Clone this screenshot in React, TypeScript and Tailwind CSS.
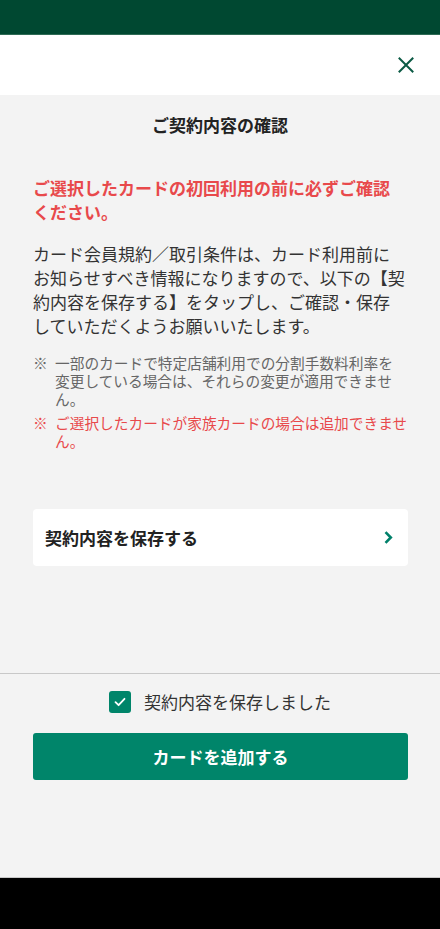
import { useState } from 'react'

const font = { fontFamily: '"Noto Sans CJK JP", "Noto Sans", sans-serif' }

function CloseIcon() {
  return (
    <svg width="16" height="16" viewBox="0 0 16 16" fill="none" stroke="#0b5a44" strokeWidth="2" strokeLinecap="square">
      <path d="M1.5 1.5 14.5 14.5M14.5 1.5 1.5 14.5" />
    </svg>
  )
}

function ChevronIcon() {
  return (
    <svg width="9" height="13" viewBox="0 0 9 13" fill="none" stroke="#00806a" strokeWidth="2.6">
      <path d="M1.5 1.2 6.8 6.5 1.5 11.8" />
    </svg>
  )
}

function CheckIcon() {
  return (
    <svg width="14" height="14" viewBox="0 0 14 14" fill="none" stroke="#fff" strokeWidth="1.8" strokeLinecap="round" strokeLinejoin="round">
      <path d="M2.5 7.2 5.6 10.2 11.5 3.8" />
    </svg>
  )
}

export default function App() {
  const [saved, setSaved] = useState(true)

  return (
    <div className="w-[440px] bg-[#f3f3f3]" style={font}>
      <div className="h-[35px] border-b border-[#2e6b55] bg-[#004831]" />
      <header className="flex h-[60px] items-center justify-end bg-white pr-[22px]">
        <button type="button" aria-label="閉じる" className="flex h-6 w-6 items-center justify-center">
          <CloseIcon />
        </button>
      </header>

      <main className="flex h-[782px] flex-col">
        <h1 className="pt-[18px] text-center text-[17px] font-bold leading-[24px] text-[#222]">ご契約内容の確認</h1>

        <div className="ml-[33px] mr-8">
          <p className="mt-[39px] whitespace-nowrap text-[17px] font-bold leading-[24px] text-[#e8494b]">
            ご選択したカードの初回利用の前に必ずご確認
            <br />
            ください。
          </p>

          <p className="mt-[18px] whitespace-nowrap text-[17px] leading-[24px] text-[#333]">
            カード会員規約／取引条件は、カード利用前に
            <br />
            お知らせすべき情報になりますので、以下の【契
            <br />
            約内容を保存する】をタップし、ご確認・保存
            <br />
            していただくようお願いいたします。
          </p>

          <ul className="mt-4 grid gap-[6px] text-[14.7px] leading-[18px]">
            <li className="flex text-[#666]">
              <span className="w-[22px] shrink-0">※</span>
              <span className="whitespace-nowrap">
                一部のカードで特定店舗利用での分割手数料利率を
                <br />
                変更している場合は、それらの変更が適用できませ
                <br />
                ん。
              </span>
            </li>
            <li className="flex text-[#e8494b]">
              <span className="w-[22px] shrink-0">※</span>
              <span className="whitespace-nowrap">
                ご選択したカードが家族カードの場合は追加できませ
                <br />
                ん。
              </span>
            </li>
          </ul>

          <button
            type="button"
            className="mt-[59px] flex h-[57px] w-full items-center justify-between rounded-[4px] bg-white pl-3 pr-[15px] text-left"
          >
            <span className="text-[17px] font-bold leading-[24px] text-[#222]">契約内容を保存する</span>
            <ChevronIcon />
          </button>
        </div>

        <div className="mt-[107px] border-t border-[#c8c8c8] pt-[17px]">
          <label className="flex cursor-pointer items-center justify-center gap-[13px]">
            <input type="checkbox" className="sr-only" checked={saved} onChange={(e) => setSaved(e.target.checked)} />
            <span
              className={`flex h-[22px] w-[22px] items-center justify-center rounded-[3px] ${saved ? 'bg-[#00856a]' : 'border border-[#999] bg-white'}`}
            >
              {saved ? <CheckIcon /> : null}
            </span>
            <span className="text-[17px] leading-[22px] text-[#333]">契約内容を保存しました</span>
          </label>
          <div className="ml-[33px] mr-8 mt-5">
            <button
              type="button"
              className="flex h-[47px] w-full items-center justify-center rounded-[3px] bg-[#00856a] text-[17px] font-bold text-white"
            >
              カードを追加する
            </button>
          </div>
        </div>
      </main>

      <div className="h-[52px] border-t border-[#c8c8c8] bg-black" />
    </div>
  )
}
